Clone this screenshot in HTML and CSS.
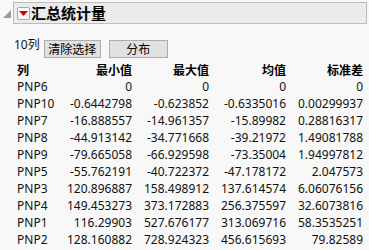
FILE: index.html
```html
<!DOCTYPE HTML>
<html>
<head>
<meta charset="UTF-8">
<title>汇总统计量</title>
<link rel="stylesheet" href="styles.css">
</head>
<body>
<div class="report">
    <div class="outline">
        <div class="disclose"><span class="tri"></span></div>
        <div class="outline-box">
            <span class="hotspot"><svg width="9" height="5" viewBox="0 0 9 5"><path d="M0 0 L9 0 L4.5 5 Z" fill="#d40000"/></svg></span>
            <span class="outline-title">汇总统计量</span>
        </div>
    </div>
    <div class="tools">
        <span class="count">10列</span>
        <button class="btn btn-clear">清除选择</button>
        <button class="btn btn-dist">分布</button>
    </div>
    <div class="stats">
        <div class="hd left">列</div><div class="hd">最小值</div><div class="hd">最大值</div><div class="hd">均值</div><div class="hd">标准差</div>
        <div class="left">PNP6</div><div>0</div><div>0</div><div>0</div><div>0</div>
        <div class="left">PNP10</div><div>-0.6442798</div><div>-0.623852</div><div>-0.6335016</div><div>0.00299937</div>
        <div class="left">PNP7</div><div>-16.888557</div><div>-14.961357</div><div>-15.89982</div><div>0.28816317</div>
        <div class="left">PNP8</div><div>-44.913142</div><div>-34.771668</div><div>-39.21972</div><div>1.49081788</div>
        <div class="left">PNP9</div><div>-79.665058</div><div>-66.929598</div><div>-73.35004</div><div>1.94997812</div>
        <div class="left">PNP5</div><div>-55.762191</div><div>-40.722372</div><div>-47.178172</div><div>2.047573</div>
        <div class="left">PNP3</div><div>120.896887</div><div>158.498912</div><div>137.614574</div><div>6.06076156</div>
        <div class="left">PNP4</div><div>149.453273</div><div>373.172883</div><div>256.375597</div><div>32.6073816</div>
        <div class="left">PNP1</div><div>116.29903</div><div>527.676177</div><div>313.069716</div><div>58.3535251</div>
        <div class="left">PNP2</div><div>128.160882</div><div>728.924323</div><div>456.615693</div><div>79.82589</div>
    </div>
</div>
</body>
</html>
```
FILE: styles.css
```css
*{margin:0;padding:0;box-sizing:border-box;}
body{background:#f8f8f8;font-family:"Noto Sans","Noto Sans CJK SC",sans-serif;color:#111;}
.report{padding-top:2px;}
.outline{display:grid;grid-template-columns:13px 354px;align-items:start;}
.disclose{padding:8px 0 0 3px;height:22px;}
.tri{display:block;width:0;height:0;border-style:solid;border-width:0 0 8px 8px;border-color:transparent transparent #9a9a9a transparent;}
.outline-box{height:22px;background:#ebebeb;border:1px solid #bdbdbd;display:flex;align-items:center;padding-left:3px;}
.hotspot{width:13px;height:13px;flex:none;background:#fbfbfb;border:1px solid #a8a8a8;border-radius:2px;display:flex;align-items:center;justify-content:center;margin-right:1px;}
.hotspot svg{display:block;}
.outline-title{font-family:"Noto Sans CJK SC",sans-serif;font-weight:bold;font-size:15px;line-height:20px;color:#000;}
.tools{display:flex;align-items:flex-start;margin-top:15px;padding-left:14px;height:21px;}
.count{font-size:12px;line-height:12px;margin-right:4px;}
.btn{font-family:"Noto Sans CJK SC",sans-serif;font-size:12px;height:18px;line-height:14px;background:#e1e1e1;border:1px solid #adadad;color:#000;margin-top:1px;}
.btn-clear{width:57px;margin-right:8px;}
.btn-dist{width:59px;}
.stats{display:grid;grid-template-columns:45px 70px 77px 77px 77px;padding-left:17px;margin-top:1px;font-size:12px;line-height:17px;}
.stats div{text-align:right;white-space:nowrap;}
.stats .left{text-align:left;}
.stats .hd{font-family:"Noto Sans CJK SC",sans-serif;font-weight:bold;color:#000;}
```
